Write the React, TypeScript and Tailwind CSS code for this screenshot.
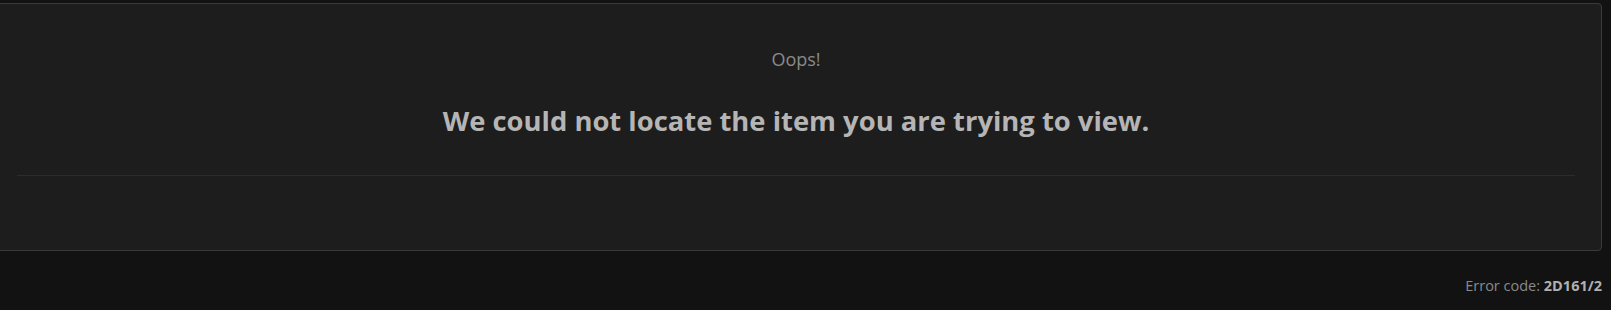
export default function App() {
  return (
    <div
      className="w-[1611px] h-[310px] bg-[#121212] overflow-hidden pt-[3px]"
      style={{ fontFamily: '"Open Sans", "Noto Sans", sans-serif' }}
    >
      <div className="ml-[-10px] w-[1612px] h-[248px] bg-[#1d1d1d] border border-[#3a3a3a] rounded-[4px] flex flex-col items-center">
        <div className="mt-[43px] text-[18px] leading-[24px] text-[#8a8a8a]">Oops!</div>
        <div className="mt-[32px] text-[27.4px] leading-[36px] font-bold text-[#b5b5b5]">
          We could not locate the item you are trying to view.
        </div>
        <div className="mt-[36px] self-start w-[1558px] ml-[26px] h-px bg-[#2c2c2c]" />
      </div>
      <div className="flex justify-end pr-[9px] mt-[25px]">
        <span className="text-[14.5px] leading-[20px] text-[#8a8a8a]">
          Error code: <span className="font-bold text-[#b0b0b0]">2D161/2</span>
        </span>
      </div>
    </div>
  );
}
